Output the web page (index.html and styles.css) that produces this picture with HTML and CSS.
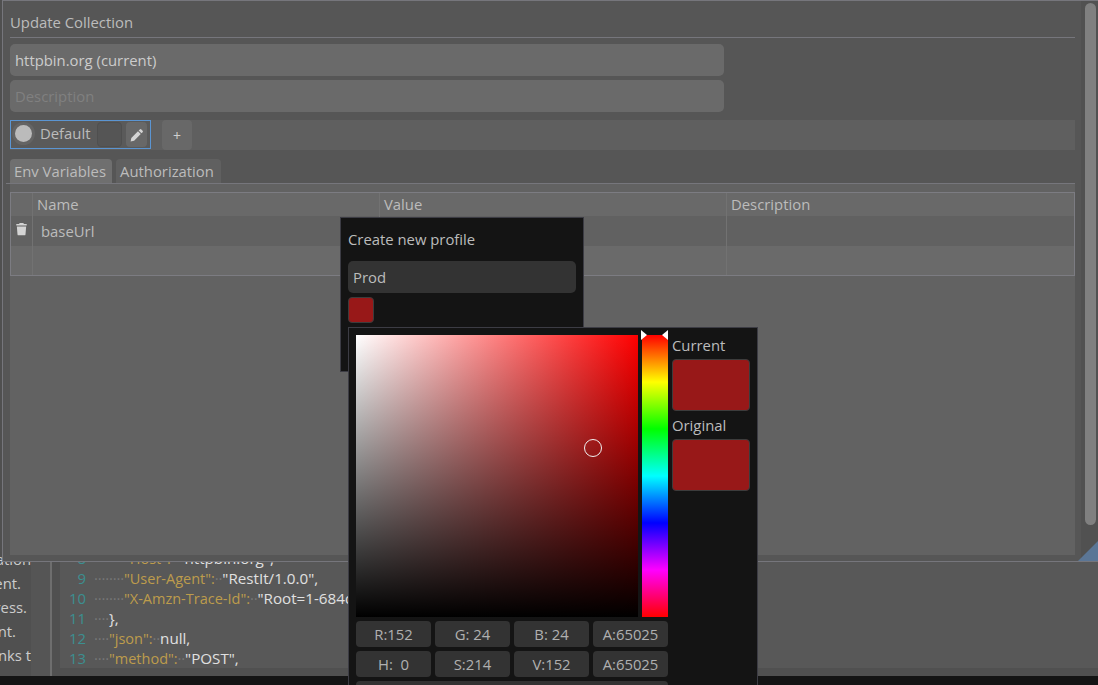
FILE: index.html
```html
<!DOCTYPE html>
<html lang="en">
<head>
	<meta charset="UTF-8">
	<title>Update Collection</title>
	<link rel="stylesheet" href="styles.css">
</head>
<body>
	<div class="app">
		<div class="main">
			<div class="side">
				<div class="side-text">
					<div class="t-tion">ation</div>
					<div class="t-ent">ment.</div>
					<div class="t-ress">dress.</div>
					<div class="t-nt">ent.</div>
					<div class="t-nks">thanks t</div>
				</div>
			</div>
			<div class="divider"></div>
			<div class="code">
				<div class="line"><span class="num">8</span><span class="sp">········</span><span class="key">"Host":</span><span class="sp gap">··</span><span class="val">"httpbin.org",</span></div>
				<div class="line"><span class="num">9</span><span class="sp">········</span><span class="key">"User-Agent":</span><span class="sp gap">··</span><span class="val">"RestIt/1.0.0",</span></div>
				<div class="line"><span class="num">10</span><span class="sp">········</span><span class="key">"X-Amzn-Trace-Id":</span><span class="sp gap">··</span><span class="val">"Root=1-684d</span></div>
				<div class="line"><span class="num">11</span><span class="sp">····</span><span class="val">},</span></div>
				<div class="line"><span class="num">12</span><span class="sp">····</span><span class="key">"json":</span><span class="sp gap">··</span><span class="val">null,</span></div>
				<div class="line"><span class="num">13</span><span class="sp">····</span><span class="key">"method":</span><span class="sp gap">··</span><span class="val">"POST",</span></div>
			</div>
		</div>
		<div class="footer"></div>

		<!-- 弹窗 -->
		<div class="modal">
			<div class="modal-body">
				<div class="title">Update Collection</div>
				<div class="field">httpbin.org (current)</div>
				<div class="field hint">Description</div>
				<div class="profiles">
					<div class="profile">
						<span class="dot"></span>
						<span class="profile-name">Default</span>
						<span class="empty-box"></span>
						<span class="edit">
							<svg width="14" height="14" viewBox="0 0 16 16"><path d="M11.2 1.6 a1.3 1.3 0 0 1 1.8 0 l1.4 1.4 a1.3 1.3 0 0 1 0 1.8 l-1.3 1.3 -3.2 -3.2 z M9.1 3.7 l3.2 3.2 -7.6 7.6 -4 .9 .8 -4.1 z" fill="#d4d4d4"></path></svg>
						</span>
					</div>
					<div class="add">+</div>
				</div>
				<div class="tabs">
					<div class="tab active">Env Variables</div>
					<div class="tab">Authorization</div>
				</div>
				<div class="pane">
					<div class="table">
						<div class="row head">
							<div class="cell first"></div>
							<div class="cell">Name</div>
							<div class="cell">Value</div>
							<div class="cell">Description</div>
						</div>
						<div class="row one">
							<div class="cell first">
								<svg width="13" height="14" viewBox="0 0 14 14"><path d="M5 0.5 h4 l.6 1.2 h3 v1.6 h-11.2 v-1.6 h3 z M2 4.3 h10 l-.7 8.5 a1 1 0 0 1 -1 .9 h-6.6 a1 1 0 0 1 -1 -.9 z" fill="#d4d4d4"></path></svg>
							</div>
							<div class="cell indent">baseUrl</div>
							<div class="cell"></div>
							<div class="cell"></div>
						</div>
						<div class="row two">
							<div class="cell first"></div>
							<div class="cell"></div>
							<div class="cell"></div>
							<div class="cell"></div>
						</div>
					</div>
				</div>
			</div>
			<div class="scroll"><div class="thumb"></div></div>
			<div class="grip"></div>
		</div>

		<!-- 新建配置 -->
		<div class="popup">
			<div class="popup-title">Create new profile</div>
			<div class="popup-input">Prod</div>
			<div class="popup-swatch"></div>
		</div>

		<!-- 取色器 -->
		<div class="picker">
			<div class="picker-top">
				<div class="sv"><span class="marker"></span></div>
				<div class="hue"><span class="arrow left"></span><span class="arrow right"></span></div>
				<div class="preview">
					<div class="preview-label">Current</div>
					<div class="preview-color"></div>
					<div class="preview-label second">Original</div>
					<div class="preview-color"></div>
				</div>
			</div>
			<div class="values">
				<div class="value">R:152</div>
				<div class="value">G: 24</div>
				<div class="value">B: 24</div>
				<div class="value">A:65025</div>
				<div class="value">H:&nbsp; 0</div>
				<div class="value">S:214</div>
				<div class="value">V:152</div>
				<div class="value">A:65025</div>
				<div class="value wide"></div>
			</div>
		</div>
	</div>
</body>
</html>
```
FILE: styles.css
```css
*{
	box-sizing: border-box;
}
html, body{
	margin: 0;
	height: 100%;
	overflow: hidden;
}
body{
	background: #141414;
	font-family: "Open Sans", "Noto Sans", sans-serif;
	font-size: 14.85px;
	color: #bcbcbc;
}
.app{
	position: relative;
	width: 1098px;
	height: 685px;
	overflow: hidden;
	display: flex;
	flex-direction: column;
}
.main{
	height: 676px;
	display: flex;
	background: #505050;
}
.side{
	width: 50px;
	background: #555555;
	overflow: hidden;
}
.side-text{
	width: 31px;
	height: 100%;
	background: #505050;
	display: flex;
	flex-direction: column;
	justify-content: flex-end;
	overflow: hidden;
	padding-bottom: 9px;
	color: #cccccc;
	white-space: nowrap;
}
.side-text div{
	height: 24px;
	line-height: 24px;
	flex-shrink: 0;
	display: flex;
	justify-content: flex-end;
}
.t-ent{
	padding-right: 10px;
}
.t-ress{
	padding-right: 4px;
}
.t-nt{
	padding-right: 15px;
}
.divider{
	width: 2px;
	background: #6e6e6e;
}
.code{
	flex: 1;
	margin: 0 0 8px 8px;
	background: #585858;
	display: flex;
	flex-direction: column;
	justify-content: flex-end;
	overflow: hidden;
	white-space: nowrap;
}
.line{
	height: 20px;
	line-height: 21px;
	display: flex;
}
.num{
	width: 26px;
	text-align: right;
	margin-right: 8px;
	color: #3c8f90;
	flex-shrink: 0;
}
.sp{
	color: #777777;
	letter-spacing: -0.15px;
}
.key{
	color: #bd9c4c;
	font-size: 14.5px;
}
.val{
	color: #e0e0e0;
	font-size: 15.2px;
}
.footer{
	flex: 1;
	background: #141414;
}

.modal{
	position: absolute;
	left: 2px;
	top: 0;
	width: 1096px;
	height: 562px;
	background: #565656;
	border: 1px solid #76767c;
	border-right: 0;
	display: flex;
}
.modal-body{
	flex: 1;
	padding: 0 6px 0 7px;
	display: flex;
	flex-direction: column;
	min-width: 0;
}
.title{
	height: 37px;
	line-height: 43px;
	border-bottom: 1px solid #76767c;
	margin-bottom: 6px;
	flex-shrink: 0;
}
.field{
	width: 714px;
	height: 32px;
	line-height: 33px;
	padding-left: 5px;
	margin-bottom: 4px;
	background: #6a6a6a;
	border-radius: 5px;
	color: #cccccc;
	flex-shrink: 0;
}
.hint{
	color: #808080;
	margin-bottom: 8px;
}
.profiles{
	height: 30px;
	background: #5f5f5f;
	display: flex;
	gap: 11px;
	flex-shrink: 0;
}
.profile{
	width: 141px;
	height: 29px;
	border: 1px solid #5b95d2;
	display: flex;
	align-items: center;
	background: #5a5a5a;
}
.dot{
	width: 17px;
	height: 17px;
	margin: -2px 0 0 4px;
	border-radius: 50%;
	background: #bbbbbb;
	box-shadow: 0 0 0 3px #646464;
	flex-shrink: 0;
}
.profile-name{
	margin: -4px 0 0 8px;
	width: 57px;
	flex-shrink: 0;
}
.empty-box{
	width: 25px;
	height: 25px;
	background: #555555;
	border: 1px solid #4f4f4f;
	border-radius: 4px;
}
.edit{
	width: 21px;
	height: 25px;
	margin-left: 4px;
	background: #686868;
	border-radius: 4px;
	display: flex;
	align-items: center;
	justify-content: center;
}
.add{
	width: 30px;
	height: 30px;
	line-height: 31px;
	text-align: center;
	background: #686868;
	border-radius: 4px;
	color: #d0d0d0;
	font-size: 14px;
}
.tabs{
	margin: 9px 0 0 -4px;
	height: 25px;
	display: flex;
	gap: 4px;
	border-bottom: 1px solid #76767c;
	padding-left: 4px;
	flex-shrink: 0;
}
.tab{
	height: 24px;
	line-height: 25px;
	padding: 0 4px;
	width: 105px;
	background: #606060;
	border-radius: 4px 4px 0 0;
	white-space: nowrap;
}
.tab.active{
	width: 102px;
	background: #6f6f6f;
}
.pane{
	flex: 1;
	margin-bottom: 6px;
	background: #626262;
	padding-top: 8px;
	min-height: 0;
}
.table{
	border: 1px solid #7c7c82;
}
.row{
	display: grid;
	grid-template-columns: 21px 347px 347px 1fr;
}
.cell{
	border-left: 1px solid #727272;
	padding-left: 4px;
	display: flex;
	align-items: center;
}
.cell.first{
	border-left: 0;
	padding-left: 4px;
	padding-bottom: 4px;
}
.cell.indent{
	padding-left: 8px;
}
.head{
	height: 23px;
	background: #696969;
	line-height: 23px;
}
.head .cell{
	align-items: flex-start;
}
.one{
	height: 30px;
	background: #616161;
}
.two{
	height: 29px;
	background: #6a6a6a;
}
.scroll{
	width: 17px;
	background: #515151;
	padding: 2px 2px 0 4px;
}
.thumb{
	width: 11px;
	height: 522px;
	background: #808080;
	border-radius: 6px;
}
.grip{
	position: absolute;
	right: 0;
	bottom: 0;
	width: 0;
	height: 0;
	border-left: 20px solid transparent;
	border-bottom: 20px solid #5b7696;
}

.popup{
	position: absolute;
	left: 340px;
	top: 217px;
	width: 244px;
	height: 155px;
	background: #141414;
	border: 1px solid #3c3c44;
	padding: 0 7px;
}
.popup-title{
	height: 43px;
	line-height: 43px;
}
.popup-input{
	height: 32px;
	line-height: 33px;
	padding-left: 5px;
	background: #333333;
	border-radius: 5px;
}
.popup-swatch{
	width: 26px;
	height: 26px;
	margin-top: 4px;
	background: #981818;
	border: 1px solid #3c3c3c;
	border-radius: 4px;
}

.picker{
	position: absolute;
	left: 348px;
	top: 327px;
	width: 410px;
	height: 370px;
	background: #141414;
	border: 1px solid #3c3c44;
	padding: 7px;
}
.picker-top{
	display: flex;
}
.sv{
	position: relative;
	width: 282px;
	height: 282px;
	background: linear-gradient(to bottom, transparent, #000), linear-gradient(to right, #fff, #f00);
}
.marker{
	position: absolute;
	left: 228px;
	top: 104px;
	width: 18px;
	height: 18px;
	border: 1.5px solid #f0f0f0;
	border-radius: 50%;
}
.hue{
	position: relative;
	width: 26px;
	height: 282px;
	margin-left: 4px;
	background: linear-gradient(to bottom, #f00, #ff0 16.67%, #0f0 33.33%, #0ff 50%, #00f 66.67%, #f0f 83.33%, #f00);
}
.arrow{
	position: absolute;
	top: -5px;
	width: 0;
	height: 0;
	border-top: 5px solid transparent;
	border-bottom: 5px solid transparent;
}
.arrow.left{
	left: -1px;
	border-left: 6px solid #fff;
}
.arrow.right{
	right: 0;
	border-right: 6px solid #fff;
}
.preview{
	width: 78px;
	margin-left: 4px;
}
.preview-label{
	height: 24px;
	line-height: 21px;
}
.preview-label.second{
	height: 28px;
	line-height: 29px;
}
.preview-color{
	height: 52px;
	background: #981818;
	border: 1px solid #3c3c3c;
	border-radius: 4px;
}
.values{
	width: 312px;
	margin-top: 4px;
	display: grid;
	grid-template-columns: repeat(4, 75px);
	grid-auto-rows: 26px;
	gap: 4px;
}
.value{
	background: #333333;
	border-radius: 4px;
	text-align: center;
	line-height: 26px;
	color: #b0b0b0;
}
.value.wide{
	grid-column: 1 / 5;
}
```
